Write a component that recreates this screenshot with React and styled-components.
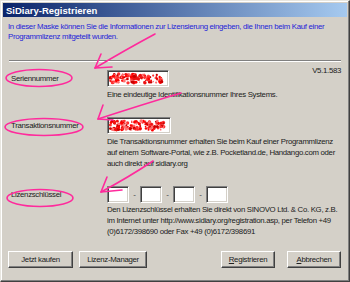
import React from 'react'
import styled, { createGlobalStyle } from 'styled-components'

const GlobalStyle = createGlobalStyle`
  html, body {
    margin: 0;
    padding: 0;
    background: #d4d0c8;
  }
  body {
    font-family: "Liberation Sans", Arial, sans-serif;
  }
`

const Window = styled.div`
  position: relative;
  box-sizing: border-box;
  width: 350px;
  height: 282px;
  padding: 2px;
  background: #d4d0c8;
  border-top: 1px solid #e8e6e0;
  border-left: 1px solid #e8e6e0;
  border-right: 1px solid #404040;
  border-bottom: 1px solid #404040;
  box-shadow: inset -1px -1px 0 #808080, inset 1px 1px 0 #ffffff;
  display: flex;
  flex-direction: column;
  overflow: hidden;
`

const TitleBar = styled.div`
  flex: none;
  height: 14px;
  display: flex;
  align-items: center;
  padding-left: 3px;
  background: linear-gradient(to right, #0a246a, #a6caf0);
  color: #ffffff;
  font-size: 9.5px;
  font-weight: bold;
`

const Text = styled.div`
  font-size: 7.8px;
  letter-spacing: -0.3px;
  white-space: nowrap;
`

const Intro = styled(Text)`
  margin: 5px 0 0 5px;
  color: #2323d8;
  line-height: 10px;
`

const Separator = styled.div`
  flex: none;
  margin: 18px 6px 0 6px;
  height: 0;
  border-top: 1px solid #808080;
  border-bottom: 1px solid #ffffff;
`

const Content = styled.div`
  display: flex;
  flex-direction: column;
  padding: 0 6px 0 8px;
`

const Block = styled.div`
  display: grid;
  grid-template-columns: 96px 1fr;
  margin-top: ${({ top }) => top}px;
  color: #202020;
`

const Label = styled(Text)`
  display: flex;
  align-items: center;
  height: ${({ h }) => h}px;
`

const FieldRow = styled.div`
  display: flex;
  align-items: center;
  justify-content: space-between;
  height: ${({ h }) => h}px;
`

const Version = styled(Text)`
  align-self: flex-start;
  margin-top: -4px;
`

const Sunken = styled.div`
  box-sizing: border-box;
  width: ${({ w }) => w}px;
  height: ${({ h }) => h}px;
  background: #ffffff;
  border-top: 1px solid #808080;
  border-left: 1px solid #808080;
  border-right: 1px solid #ffffff;
  border-bottom: 1px solid #ffffff;
  box-shadow: inset 1px 1px 0 #404040, inset -1px -1px 0 #d4d0c8;
  overflow: hidden;
  display: flex;
  align-items: center;
`

const KeyGroup = styled.div`
  display: flex;
  align-items: center;
`

const Dash = styled.span`
  width: 11px;
  text-align: center;
  font-size: 8px;
  color: #404040;
`

const Description = styled(Text)`
  grid-column: 2;
  margin-top: ${({ top }) => top}px;
  line-height: 11px;
`

const ButtonBar = styled.div`
  display: flex;
  justify-content: space-between;
  margin: 14px 0 0 -3px;
`

const ButtonGroup = styled.div`
  display: flex;
  gap: ${({ gap }) => gap}px;
`

const Button = styled.button`
  box-sizing: border-box;
  width: ${({ w }) => w}px;
  height: 17px;
  padding: 0;
  background: #d4d0c8;
  color: #202020;
  font-family: inherit;
  font-size: 7.8px;
  letter-spacing: -0.3px;
  white-space: nowrap;
  border-top: 1px solid #ffffff;
  border-left: 1px solid #ffffff;
  border-right: 1px solid #404040;
  border-bottom: 1px solid #404040;
  box-shadow: inset -1px -1px 0 #808080;
  u {
    text-decoration: underline;
  }
`

const Overlay = styled.svg`
  position: absolute;
  left: 0;
  top: 0;
  pointer-events: none;
`

const seeded = (seed) => {
  let s = seed
  return () => {
    s = (s * 9301 + 49297) % 233280
    return s / 233280
  }
}

// rough red blotches standing in for the censored numbers
const Scribble = ({ seed, w, h }) => {
  const rnd = seeded(seed)
  const blobs = Array.from(Array(130), (_, i) => ({
    x: 2 + rnd() * (w - 6),
    y: 2 + rnd() * (h - 4),
    r: 0.6 + rnd() * 1.3,
    c: ['#ff0000', '#ee1111', '#ff3030', '#cc0000', '#ff7070'][i % 5]
  }))
  return (
    <svg width={w} height={h}>
      {blobs.map((b, i) => (
        <circle key={i} cx={b.x} cy={b.y} r={b.r} fill={b.c} />
      ))}
    </svg>
  )
}

const Annotations = () => (
  <Overlay width="350" height="282" viewBox="0 0 350 282">
    <g fill="none" stroke="#ff2a9c" strokeWidth="1.6" strokeLinecap="round" strokeLinejoin="round">
      <path d="M154 33 Q126 48 94 67" />
      <path d="M100 53 L94 67 L111 66" />
      <path d="M180 92 Q140 104 97 118" />
      <path d="M102 104 L97 118 L112 119" />
      <path d="M152 160 Q128 176 100 191" />
      <path d="M106 176 L100 191 L121 189" />
      <ellipse cx="38" cy="77" rx="33" ry="8.5" />
      <ellipse cx="43" cy="126" rx="39" ry="8.5" />
      <ellipse cx="39" cy="197" rx="33" ry="8.5" />
    </g>
  </Overlay>
)

export default function App() {
  return (
    <>
      <GlobalStyle />
      <Window>
        <TitleBar>SiDiary-Registrieren</TitleBar>
        <Intro>
          In dieser Maske können Sie die Informationen zur Lizensierung eingeben, die Ihnen beim Kauf einer
          <br />
          Programmlizenz mitgeteilt wurden.
        </Intro>
        <Separator />
        <Content>
          <Block top={8}>
            <Label h={17}>Seriennummer</Label>
            <FieldRow h={17}>
              <Sunken w={62} h={17}>
                <Scribble seed={7} w={58} h={13} />
              </Sunken>
              <Version>V5.1.583</Version>
            </FieldRow>
            <Description top={2}>Eine eindeutige Identifikationsnummer Ihres Systems.</Description>
          </Block>
          <Block top={17}>
            <Label h={17}>Transaktionsnummer</Label>
            <FieldRow h={17}>
              <Sunken w={64} h={17}>
                <Scribble seed={31} w={60} h={13} />
              </Sunken>
            </FieldRow>
            <Description top={2}>
              Die Transaktionsnummer erhalten Sie beim Kauf einer Programmlizenz
              <br />
              auf einem Software-Portal, wie z.B. Pocketland.de, Handango.com oder
              <br />
              auch direkt auf sidiary.org
            </Description>
          </Block>
          <Block top={17}>
            <Label h={17}>Lizenzschlüssel</Label>
            <FieldRow h={17}>
              <KeyGroup>
                <Sunken w={22} h={17} />
                <Dash>-</Dash>
                <Sunken w={22} h={17} />
                <Dash>-</Dash>
                <Sunken w={22} h={17} />
                <Dash>-</Dash>
                <Sunken w={22} h={17} />
              </KeyGroup>
            </FieldRow>
            <Description top={1}>
              Den Lizenzschlüssel erhalten Sie direkt von SINOVO Ltd. &amp; Co. KG, z.B.
              <br />
              im Internet unter http://www.sidiary.org/registration.asp, per Telefon +49
              <br />
              (0)6172/398690 oder Fax +49 (0)6172/398691
            </Description>
          </Block>
          <ButtonBar>
            <ButtonGroup gap={6}>
              <Button w={65}>Jetzt kaufen</Button>
              <Button w={68}>Lizenz-Manager</Button>
            </ButtonGroup>
            <ButtonGroup gap={12}>
              <Button w={54}>
                <u>R</u>egistrieren
              </Button>
              <Button w={54}>
                <u>A</u>bbrechen
              </Button>
            </ButtonGroup>
          </ButtonBar>
        </Content>
        <Annotations />
      </Window>
    </>
  )
}
